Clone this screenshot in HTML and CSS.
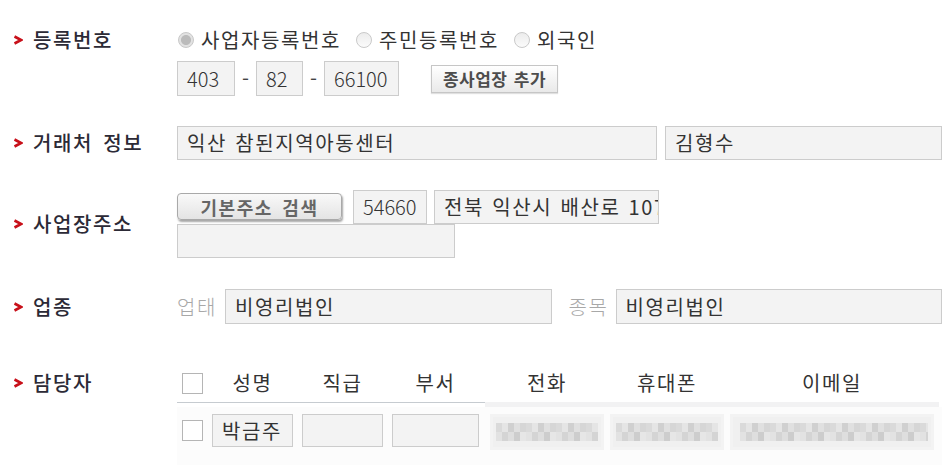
FILE: index.html
```html
<!DOCTYPE html>
<html lang="ko">
<head>
<meta charset="utf-8">
<title>거래처 정보</title>
<link rel="stylesheet" href="styles.css">
</head>
<body>
<div class="form">
  <div class="row row-reg">
    <div class="label label-top"><svg class="arrow" viewBox="0 0 10 10" width="10" height="10"><polyline points="1.5,1.5 8,5 1.5,8.5" fill="none" stroke="#c8101a" stroke-width="2.6" stroke-linejoin="miter"/></svg>등록번호</div>
    <div class="field">
      <div class="radios">
        <span class="radio"><span class="dot checked"></span>사업자등록번호</span>
        <span class="radio"><span class="dot"></span>주민등록번호</span>
        <span class="radio"><span class="dot"></span>외국인</span>
      </div>
      <div class="line line-reg">
        <div class="inp num w-a">403</div><span class="dash">-</span><div class="inp num w-b">82</div><span class="dash">-</span><div class="inp num w-c">66100</div>
        <button class="btn-add" type="button">종사업장 추가</button>
      </div>
    </div>
  </div>

  <div class="row row-client">
    <div class="label"><svg class="arrow" viewBox="0 0 10 10" width="10" height="10"><polyline points="1.5,1.5 8,5 1.5,8.5" fill="none" stroke="#c8101a" stroke-width="2.6"/></svg>거래처 정보</div>
    <div class="field line">
      <div class="inp w-name">익산 참된지역아동센터</div>
      <div class="inp grow gap-8">김형수</div>
    </div>
  </div>

  <div class="row row-addr">
    <div class="label"><svg class="arrow" viewBox="0 0 10 10" width="10" height="10"><polyline points="1.5,1.5 8,5 1.5,8.5" fill="none" stroke="#c8101a" stroke-width="2.6"/></svg>사업장주소</div>
    <div class="field">
      <div class="line line-addr">
        <button class="btn-search" type="button">기본주소 검색</button>
        <div class="inp num w-zip">54660</div>
        <div class="inp w-addr">전북 익산시 배산로 107</div>
      </div>
      <div class="inp w-addr2"></div>
    </div>
  </div>

  <div class="row row-biz">
    <div class="label"><svg class="arrow" viewBox="0 0 10 10" width="10" height="10"><polyline points="1.5,1.5 8,5 1.5,8.5" fill="none" stroke="#c8101a" stroke-width="2.6"/></svg>업종</div>
    <div class="field line">
      <span class="sub">업태</span>
      <div class="inp grow half">비영리법인</div>
      <span class="sub sub-2">종목</span>
      <div class="inp grow half">비영리법인</div>
    </div>
  </div>

  <div class="row row-staff">
    <div class="label label-head"><svg class="arrow" viewBox="0 0 10 10" width="10" height="10"><polyline points="1.5,1.5 8,5 1.5,8.5" fill="none" stroke="#c8101a" stroke-width="2.6"/></svg>담당자</div>
    <div class="field tbl">
      <div class="trow thead">
        <span class="chk"></span>
        <span class="th c-81">성명</span>
        <span class="th c-81">직급</span>
        <span class="th c-87">부서</span>
        <span class="th c-114">전화</span>
        <span class="th c-114">휴대폰</span>
        <span class="th c-204">이메일</span>
      </div>
      <div class="rule"><span class="rule-l"></span><span class="rule-r"></span></div>
      <div class="trow tbody">
        <span class="chk chk-row"></span>
        <div class="inp cell c-81">박금주</div>
        <div class="inp cell c-81"></div>
        <div class="inp cell c-87"></div>
        <div class="blur c-114"><span class="mosaic m1"></span></div>
        <div class="blur c-114"><span class="mosaic m2"></span></div>
        <div class="blur c-204"><span class="mosaic m3"></span></div>
      </div>
    </div>
  </div>
</div>
</body>
</html>
```

FILE: styles.css
```css
* { box-sizing: border-box; }
html, body { margin: 0; padding: 0; background: #fff; }
body {
  width: 948px;
  height: 465px;
  overflow: hidden;
  font-family: "Noto Sans CJK KR", "Noto Sans", sans-serif;
  font-size: 20px;
  color: #333;
  letter-spacing: 1.6px;
  word-spacing: 1px;
}
.form { display: flex; flex-direction: column; padding-top: 28px; }
.row { display: flex; align-items: center; }
.label {
  width: 177px;
  flex: none;
  padding-left: 13px;
  display: flex;
  align-items: center;
  gap: 10px;
  color: #2c2a36;
  font-weight: 500;
  line-height: 24px;
  word-spacing: 3px;
}
.arrow { flex: none; width: 10px; height: 10px; }
.field { flex: 1; padding-right: 6px; }
.line { display: flex; align-items: center; }

/* row 1 */
.row-reg { align-items: flex-start; }
.label-top { height: 24px; }
.radios { display: flex; align-items: center; height: 24px; gap: 14px; line-height: 24px; }
.radio { display: flex; align-items: center; gap: 7px; }
.dot {
  width: 16px; height: 16px; border-radius: 50%;
  border: 1px solid #c9c9c9;
  background: linear-gradient(#ececec, #fbfbfb);
  margin-left: 1px;
}
.dot.checked {
  border-color: #c8c8c8;
  background: radial-gradient(circle, #bbbbbb 0 4.6px, #e2e2e2 5.4px);
}
.line-reg { margin-top: 9px; height: 35px; }
.inp {
  height: 34px;
  border: 1px solid #cccccc;
  background: #f3f3f3;
  padding: 0 9px;
  display: flex;
  align-items: center;
  white-space: nowrap;
  overflow: hidden;
  line-height: 1;
  color: #333;
}
.num { letter-spacing: 0; font-weight: 300; }
.line-reg .inp { height: 35px; }
.w-a { width: 58px; }
.w-b { width: 47px; }
.w-c { width: 75px; }
.dash { width: 21px; text-align: center; color: #444; letter-spacing: 0; }
.btn-add {
  margin-left: 32px;
  width: 127px;
  height: 28px;
  border: 1px solid #c6c6c6;
  background: linear-gradient(#ffffff, #e9e9e9);
  box-shadow: 0 1px 1px rgba(0,0,0,0.12);
  font-family: "Noto Sans CJK KR", sans-serif;
  font-weight: 700;
  font-size: 17px;
  letter-spacing: 0.5px;
  color: #4d4d4d;
  padding: 0;
  word-spacing: 1px;
}

/* row 2 */
.row-client { margin-top: 30px; }
.w-name { width: 480px; }
.grow { flex: 1; }
.gap-8 { margin-left: 8px; }

/* row 3 */
.row-addr { margin-top: 30px; }
.line-addr { align-items: flex-start; }
.btn-search {
  margin-top: 3px;
  width: 165px;
  height: 27px;
  border: 1px solid #a9a9a9;
  border-radius: 4px;
  background: linear-gradient(#f9f9f9, #e4e4e4);
  box-shadow: 1px 2px 2px rgba(0,0,0,0.35);
  font-family: "Noto Sans CJK KR", sans-serif;
  font-weight: 700;
  font-size: 18px;
  letter-spacing: 1.5px;
  word-spacing: 3px;
  color: #666;
  padding: 0;
}
.w-zip { width: 74px; margin-left: 11px; }
.w-addr { width: 225px; margin-left: 7px; }
.w-addr2 { width: 278px; }

/* row 4 */
.row-biz { margin-top: 31px; }
.row-biz .inp { height: 35px; }
.sub { color: #a8a8a8; margin-right: 8px; line-height: 1; font-weight: 300; }
.sub-2 { margin-left: 17px; margin-right: 7px; }
.half { flex: 1 1 0; }

/* row 5 */
.row-staff { margin-top: 40px; align-items: flex-start; }
.label-head { height: 38px; }
.tbl { display: flex; flex-direction: column; }
.trow {
  display: grid;
  grid-template-columns: 35px 90px 90px 98px 120px 120px 208px;
}
.thead { height: 38px; align-items: center; }
.th { text-align: center; line-height: 1; color: #333; }
.c-81 { width: 81px; }
.c-87 { width: 87px; }
.c-114 { width: 114px; }
.c-204 { width: 204px; }
.chk {
  width: 21px; height: 21px;
  margin-left: 5px;
  border: 1px solid #b5b5b5;
  background: #fff;
}
.rule { display: flex; height: 5px; }
.rule-l { width: 308px; border-top: 1px solid #c6cbd0; }
.rule-r { width: 454px; background: #f2f2f3; }
.tbody {
  background: #fcfcfc;
  height: 58px;
  padding-top: 7px;
  align-items: start;
}
.chk-row { margin-top: 6px; }
.cell { height: 33px; }
.blur {
  height: 36px;
  background: #f0f0f0;
  padding: 5px 6px;
  display: flex;
  align-items: center;
  box-shadow: inset 0 0 0 3px #f3f3f3;
}
.mosaic {
  display: block;
  height: 18px;
  width: 100%;
  background:
    repeating-linear-gradient(90deg, #dadada 0 6px, #e5e5e5 6px 12px, #d0d0d0 12px 18px, #e0e0e0 18px 24px, #d6d6d6 24px 30px) top / 100% 9px no-repeat,
    repeating-linear-gradient(90deg, #e2e2e2 0 6px, #d4d4d4 6px 12px, #dedede 12px 18px, #cdcdcd 18px 24px, #e6e6e6 24px 30px) bottom / 100% 9px no-repeat;
}
.m3 { margin-left: 4px; }
```
